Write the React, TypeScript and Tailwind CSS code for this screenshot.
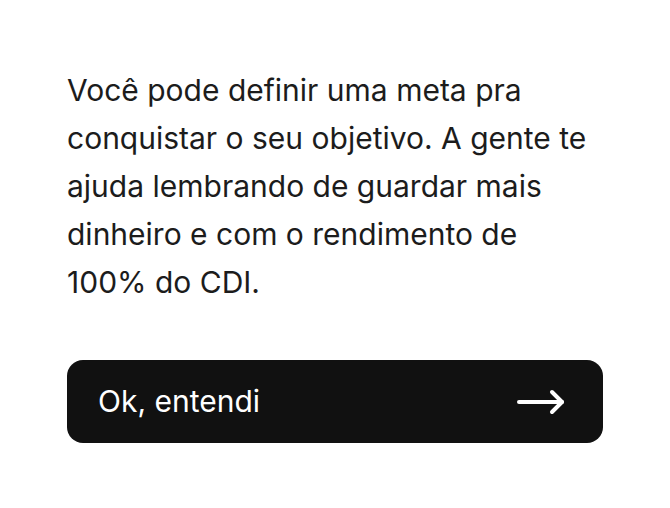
export default function App() {
  const lines = [
    "Você pode definir uma meta pra",
    "conquistar o seu objetivo. A gente te",
    "ajuda lembrando de guardar mais",
    "dinheiro e com o rendimento de",
    "100% do CDI.",
  ];
  return (
    <div className="w-[670px] h-[508px] bg-white px-[67px] pt-[66px] [font-family:Inter,'Noto_Sans',sans-serif]">
      <p className="text-[30px] leading-[48px] text-[#1c1c1c]">
        {lines.map((l, i) => (
          <span key={i} className="block whitespace-nowrap">
            {l}
          </span>
        ))}
      </p>
      <button className="mt-[54px] flex h-[83px] w-full items-center justify-between rounded-[16px] bg-[#111111] pl-[31px] pr-[38px] text-[30px] text-white">
        <span>Ok, entendi</span>
        <svg width="48" height="26" viewBox="0 0 48 26" fill="none" stroke="white" strokeWidth="4" strokeLinecap="round" strokeLinejoin="round">
          <path d="M2 13 H45" />
          <path d="M35 3 L45 13 L35 23" />
        </svg>
      </button>
    </div>
  );
}
